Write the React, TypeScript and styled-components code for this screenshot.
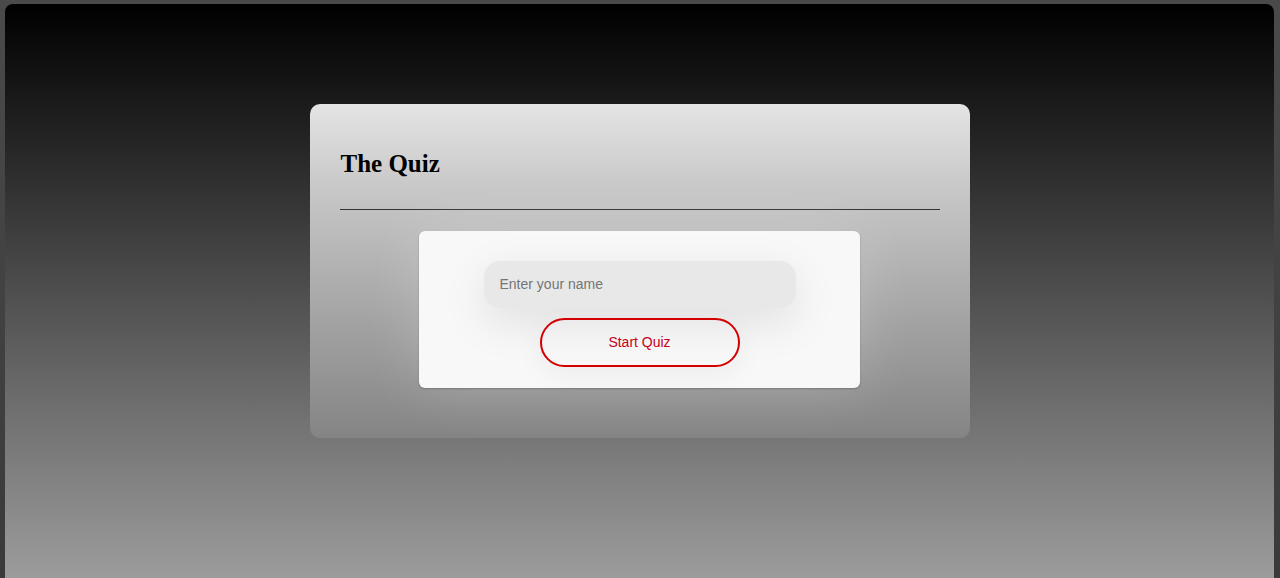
import React from "react";
import styled, { createGlobalStyle } from "styled-components";

const Global = createGlobalStyle`
  html, body { margin: 0; padding: 0; height: 100%; }
  body {
    background: linear-gradient(#4a4a4a, #3a3a3a);
    font-family: "Liberation Sans", Arial, sans-serif;
  }
  #root { height: 100%; }
`;

const Frame = styled.div`
  box-sizing: border-box;
  height: 100%;
  padding: 4px 6px 0 5px;
`;

const Screen = styled.main`
  box-sizing: border-box;
  height: 100%;
  border-radius: 8px 8px 0 0;
  background: linear-gradient(#000000 0%, #2e2e2e 30%, #6e6e6e 70%, #9c9c9c 100%);
  padding-top: 100px;
  display: flex;
  justify-content: center;
  align-items: flex-start;
`;

const Card = styled.section`
  box-sizing: border-box;
  width: 660px;
  padding: 30px 30px 50px;
  border-radius: 10px;
  background: linear-gradient(#e4e4e4 0%, #c8c8c8 25%, #a3a3a3 65%, #848484 100%);
`;

const Title = styled.h1`
  margin: 15px 0 0 1px;
  font-family: "Liberation Serif", "Times New Roman", serif;
  font-size: 25px;
  font-weight: bold;
  line-height: 30px;
  color: #000;
`;

const Rule = styled.hr`
  margin: 30px 0 21px;
  border: 0;
  border-top: 1px solid #333;
`;

const Panel = styled.div`
  box-sizing: border-box;
  width: 441px;
  margin: 0 auto;
  padding: 30px 0 21px;
  border-radius: 6px;
  background: #f8f8f8;
  box-shadow: 0 0 60px rgba(255, 255, 255, 0.2), 0 1px 2px rgba(0, 0, 0, 0.25);
  display: flex;
  flex-direction: column;
  align-items: center;
  gap: 10px;
`;

const NameInput = styled.input`
  box-sizing: border-box;
  width: 312px;
  height: 47px;
  border: none;
  outline: none;
  border-radius: 16px;
  background: #e8e8e8;
  padding: 0 16px 2px;
  font-family: "Liberation Sans", Arial, sans-serif;
  font-size: 14px;
  color: #333;
  box-shadow: 0 14px 45px rgba(0, 0, 0, 0.1);
  &::placeholder { color: #757575; }
`;

const StartButton = styled.button`
  box-sizing: border-box;
  width: 200px;
  height: 49px;
  border: 2px solid #d40000;
  border-radius: 25px;
  background: transparent;
  color: #c8001a;
  font-family: "Liberation Sans", Arial, sans-serif;
  font-size: 14px;
  padding-bottom: 2px;
  cursor: pointer;
  box-shadow: 0 8px 30px rgba(0, 0, 0, 0.05);
`;

export default function App() {
  return (
    <>
      <Global />
      <Frame>
        <Screen>
          <Card>
            <Title>The Quiz</Title>
            <Rule />
            <Panel>
              <NameInput placeholder="Enter your name" />
              <StartButton>Start Quiz</StartButton>
            </Panel>
          </Card>
        </Screen>
      </Frame>
    </>
  );
}
